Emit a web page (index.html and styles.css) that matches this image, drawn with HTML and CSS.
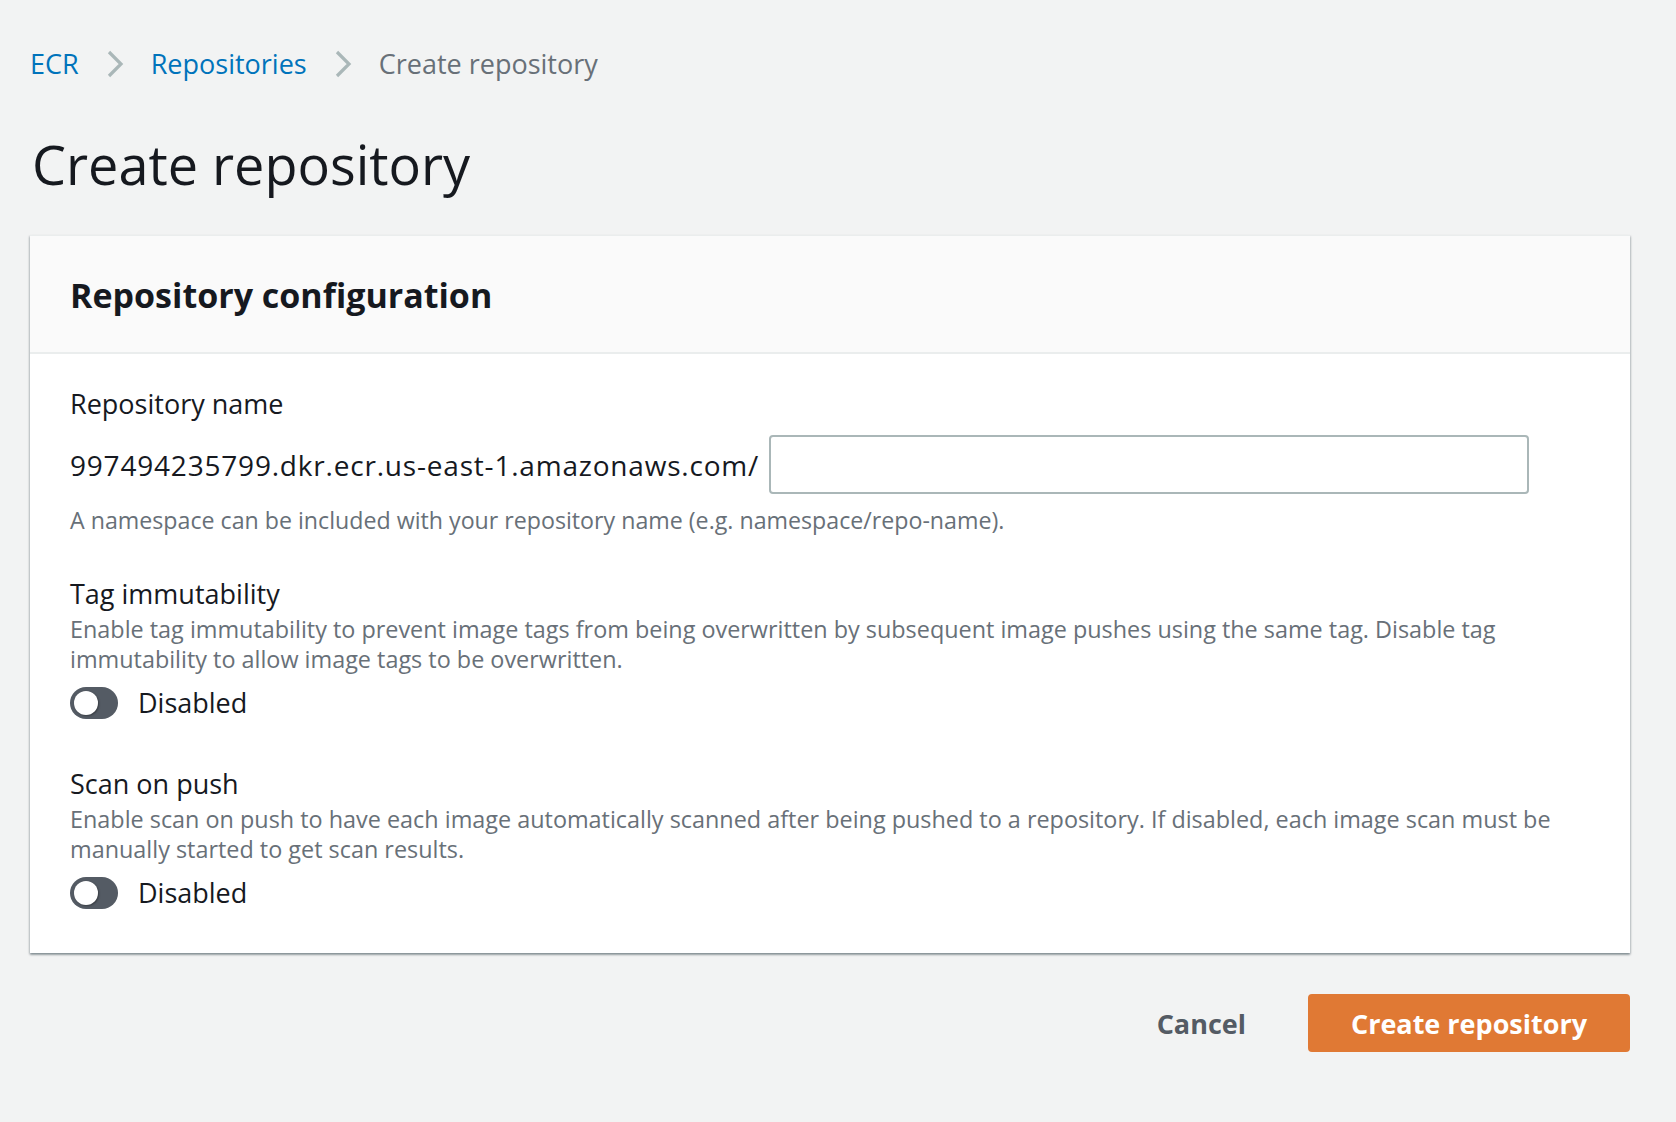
FILE: index.html
```html
<!DOCTYPE html>
<html lang="en">
<head>
<meta charset="utf-8">
<title>Create repository</title>
<link rel="stylesheet" href="styles.css">
</head>
<body>
<div class="page">
  <nav class="breadcrumbs">
    <a class="crumb-link" href="#">ECR</a>
    <svg class="chev" viewBox="0 0 18 30" width="18" height="30"><path d="M3 3 L15 15 L3 27" fill="none" stroke="#aab7b8" stroke-width="3.2"/></svg>
    <a class="crumb-link" href="#">Repositories</a>
    <svg class="chev" viewBox="0 0 18 30" width="18" height="30"><path d="M3 3 L15 15 L3 27" fill="none" stroke="#aab7b8" stroke-width="3.2"/></svg>
    <span class="crumb-current">Create repository</span>
  </nav>

  <h1 class="title">Create repository</h1>

  <section class="card">
    <div class="card-header">
      <h2 class="card-title">Repository configuration</h2>
    </div>
    <div class="card-body">
      <div class="field field-first">
        <div class="label">Repository name</div>
        <div class="name-row">
          <span class="prefix">997494235799.dkr.ecr.us-east-1.amazonaws.com/</span>
          <input class="text-input" type="text">
        </div>
        <div class="hint">A namespace can be included with your repository name (e.g. namespace/repo-name).</div>
      </div>

      <div class="field field-toggle">
        <div class="label">Tag immutability</div>
        <div class="desc">Enable tag immutability to prevent image tags from being overwritten by subsequent image pushes using the same tag. Disable tag immutability to allow image tags to be overwritten.</div>
        <div class="toggle-row">
          <span class="toggle"><span class="knob"></span></span>
          <span class="toggle-label">Disabled</span>
        </div>
      </div>

      <div class="field field-toggle">
        <div class="label">Scan on push</div>
        <div class="desc">Enable scan on push to have each image automatically scanned after being pushed to a repository. If disabled, each image scan must be manually started to get scan results.</div>
        <div class="toggle-row">
          <span class="toggle"><span class="knob"></span></span>
          <span class="toggle-label">Disabled</span>
        </div>
      </div>
    </div>
  </section>

  <div class="actions">
    <button class="btn btn-link" type="button">Cancel</button>
    <button class="btn btn-primary" type="button">Create repository</button>
  </div>
</div>
</body>
</html>
```

FILE: styles.css
```css
html, body {
  margin: 0;
  padding: 0;
  background: #f2f3f3;
}
body {
  font-family: "Open Sans", "Noto Sans", Arial, sans-serif;
  color: #16191f;
}
.page {
  padding: 44px 46px 40px 30px;
}
.breadcrumbs {
  display: flex;
  align-items: center;
  height: 40px;
  font-size: 27px;
  line-height: 40px;
}
.crumb-link {
  color: #0073bb;
  text-decoration: none;
}
.chev {
  margin: 0 27px 0 27px;
  display: block;
}
.crumb-current {
  color: #687078;
}
.title {
  margin: 46px 0 0 2px;
  font-size: 54px;
  font-weight: 400;
  line-height: 68px;
  color: #16191f;
}
.card {
  margin-top: 37px;
  background: #fff;
  box-shadow: 0 2px 2px 0 rgba(0, 28, 36, 0.3), 1px 1px 2px 0 rgba(0, 28, 36, 0.15), -1px 1px 2px 0 rgba(0, 28, 36, 0.15);
  border-top: 1px solid #eaeded;
}
.card-header {
  background: #fafafa;
  border-bottom: 2px solid #eaeded;
  padding: 37px 40px 35px;
}
.card-title {
  margin: 0;
  font-size: 34px;
  font-weight: 700;
  line-height: 44px;
  color: #16191f;
}
.card-body {
  padding: 30px 40px 37px;
}
.field {
  margin-top: 38px;
}
.field-first {
  margin-top: 0;
}
.field-toggle {
  padding-bottom: 3px;
}
.label {
  font-size: 27px;
  line-height: 40px;
}
.name-row {
  display: flex;
  align-items: center;
  margin-top: 11px;
}
.prefix {
  font-size: 28px;
  letter-spacing: 0.8px;
  line-height: 40px;
  margin-right: 10px;
  white-space: nowrap;
}
.text-input {
  width: 760px;
  height: 59px;
  box-sizing: border-box;
  border: 2px solid #aab7b8;
  border-radius: 4px;
  background: #fff;
  margin: 0;
  padding: 0 16px;
  font: inherit;
}
.hint {
  margin-top: 10px;
  font-size: 23.2px;
  line-height: 32px;
  color: #687078;
}
.desc {
  margin-top: 0;
  font-size: 23.4px;
  line-height: 30px;
  color: #687078;
  max-width: 1500px;
}
.toggle-row {
  display: flex;
  align-items: center;
  margin-top: 9px;
  height: 40px;
}
.toggle {
  position: relative;
  display: inline-block;
  width: 48px;
  height: 32px;
  border-radius: 16px;
  background: #545b64;
}
.knob {
  position: absolute;
  left: 4px;
  top: 4px;
  width: 24px;
  height: 24px;
  border-radius: 50%;
  background: #fff;
  box-shadow: 1px 1px 2px rgba(0, 0, 0, 0.35);
}
.toggle-label {
  margin-left: 20px;
  font-size: 27px;
  line-height: 40px;
}
.actions {
  display: flex;
  justify-content: flex-end;
  align-items: center;
  margin-top: 41px;
}
.btn {
  font-family: inherit;
  font-size: 27px;
  font-weight: 700;
  height: 58px;
  border-radius: 4px;
  cursor: pointer;
}
.btn-link {
  background: transparent;
  border: 2px solid transparent;
  color: #545b64;
  padding: 0 40px;
  margin-right: 20px;
}
.btn-primary {
  background: #e07934;
  border: 2px solid #e07934;
  color: #fff;
  width: 322px;
  padding: 0;
}
```
